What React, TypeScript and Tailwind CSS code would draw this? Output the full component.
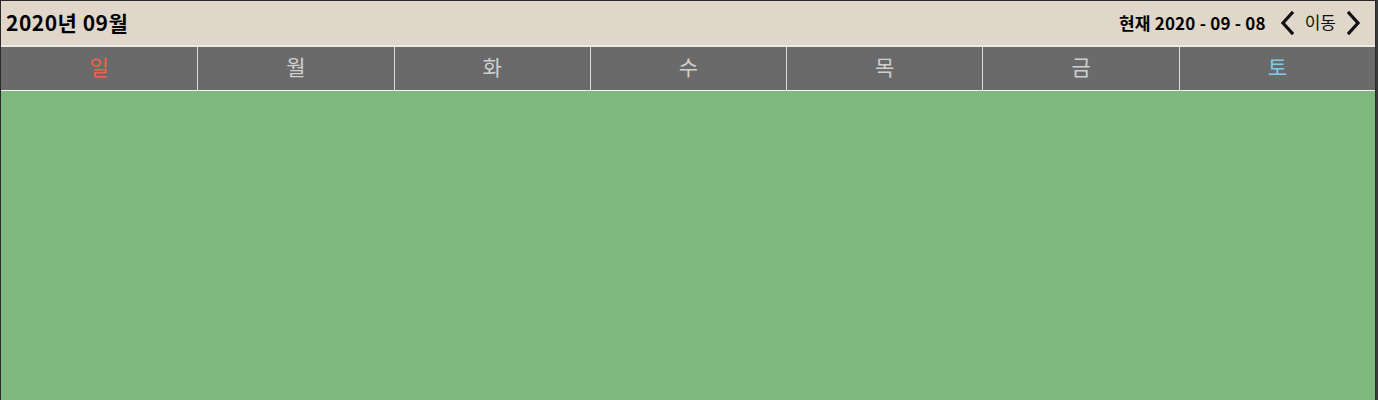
import React from 'react';

const DAYS = [
  { label: '일', color: 'text-[#f2614b]' },
  { label: '월', color: 'text-[#cfcfcf]' },
  { label: '화', color: 'text-[#cfcfcf]' },
  { label: '수', color: 'text-[#cfcfcf]' },
  { label: '목', color: 'text-[#cfcfcf]' },
  { label: '금', color: 'text-[#cfcfcf]' },
  { label: '토', color: 'text-[#7fcbe8]' },
];

const font = { fontFamily: '"Noto Sans CJK KR", "Noto Sans", sans-serif' };

const Chevron: React.FC<{ dir: 'left' | 'right' }> = ({ dir }) => (
  <svg className="w-[14px] h-[24px]" viewBox="0 0 14 24" fill="none" stroke="#111" strokeWidth={3.2} strokeLinecap="square">
    {dir === 'left' ? <path d="M12 2L3 12l9 10" /> : <path d="M2 2l9 10-9 10" />}
  </svg>
);

const App: React.FC = () => {
  return (
    <div className="w-[1378px] h-[400px] bg-[#3a3a3a] overflow-hidden" style={font}>
      <div className="w-[1376px] h-[400px] border-l border-t border-r border-[#2a2a2a] flex flex-col bg-[#7eb87e]">
        <div className="h-[46px] bg-[#e0d6ca] flex items-center justify-between pl-[5px] pr-[14px] border-b-2 border-[#eeeae4]">
          <span className="text-[21px] font-bold text-black tracking-[0.5px]">2020년 09월</span>
          <div className="flex items-center">
            <span className="text-[17px] font-bold text-black mr-[14px] tracking-[0.2px]">현재 2020 - 09 - 08</span>
            <Chevron dir="left" />
            <span className="text-[17px] text-[#111] mx-[11px] -mt-[3px]">이동</span>
            <Chevron dir="right" />
          </div>
        </div>
        <div className="h-[44px] grid grid-cols-7 bg-[#6a6a6a] border-b border-[#f4f4f4]">
          {DAYS.map((d, i) => (
            <div
              key={d.label}
              className={`flex items-center justify-center pb-[3px] text-[21px] ${d.color} ${i > 0 ? 'border-l border-[#dcdcdc]' : ''}`}
            >
              {d.label}
            </div>
          ))}
        </div>
        <div className="flex-1 bg-[#7eb87e]" />
      </div>
    </div>
  );
};

export default App;
